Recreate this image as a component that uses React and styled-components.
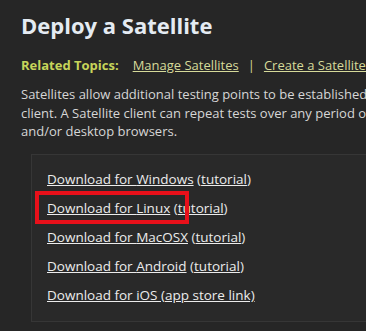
import React from "react";
import styled, { createGlobalStyle } from "styled-components";

const Global = createGlobalStyle`
  html, body { margin: 0; padding: 0; background: #262626; overflow: hidden; }
  body { font-family: "Open Sans", "Noto Sans", sans-serif; }
`;

const Page = styled.div`
  width: 600px;
  padding: 10px 0 0 21px;
  color: #d9d9d9;
`;

const Title = styled.h1`
  margin: 0;
  font-size: 22px;
  font-weight: 700;
  color: #e4ebf2;
  line-height: 30px;
`;

const Related = styled.div`
  display: flex;
  align-items: baseline;
  margin-top: 16px;
  font-size: 13px;
  line-height: 18px;
`;

const RelLabel = styled.span`
  font-weight: 700;
  color: #c6d55a;
  margin-right: 14px;
`;

const RelLink = styled.a`
  color: #d6da9a;
  text-decoration: underline;
`;

const Sep = styled.span`
  color: #d6da9a;
  margin: 0 9px;
`;

const Para = styled.p`
  margin: 11px 0 0;
  font-size: 13px;
  line-height: 18.5px;
  color: #d6d6d6;
  white-space: nowrap;
`;

const Box = styled.div`
  margin: 13px 0 0 10px;
  width: 560px;
  background: #292929;
  border: 1px solid #363636;
  padding: 10px 0 11px 15px;
  display: flex;
  flex-direction: column;
`;

const Item = styled.div`
  position: relative;
  font-size: 13.5px;
  line-height: 29px;
  color: #e6e6e6;
`;

const ItemLink = styled.a`
  color: #ececec;
  text-decoration: underline;
`;

const Highlight = styled.span`
  position: absolute;
  left: -12px;
  top: -3px;
  width: 146px;
  height: 25px;
  border: 4px solid #e8101a;
  pointer-events: none;
`;

const items = [
  { os: "Windows", extra: "tutorial" },
  { os: "Linux", extra: "tutorial", highlight: true },
  { os: "MacOSX", extra: "tutorial" },
  { os: "Android", extra: "tutorial" },
];

export default function App() {
  return (
    <>
      <Global />
      <Page>
        <Title>Deploy a Satellite</Title>
        <Related>
          <RelLabel>Related Topics:</RelLabel>
          <RelLink>Manage Satellites</RelLink>
          <Sep>|</Sep>
          <RelLink>Create a Satellite Client</RelLink>
        </Related>
        <Para>
          Satellites allow additional testing points to be established anywhere you can install the Satellite
          <br />
          client. A Satellite client can repeat tests over any period of time and can include mobile
          <br />
          and/or desktop browsers.
        </Para>
        <Box>
          {items.map((it) => (
            <Item key={it.os}>
              {it.highlight && <Highlight />}
              <ItemLink>Download for {it.os}</ItemLink> (<ItemLink>{it.extra}</ItemLink>)
            </Item>
          ))}
          <Item>
            <ItemLink>Download for iOS (app store link)</ItemLink>
          </Item>
        </Box>
      </Page>
    </>
  );
}
